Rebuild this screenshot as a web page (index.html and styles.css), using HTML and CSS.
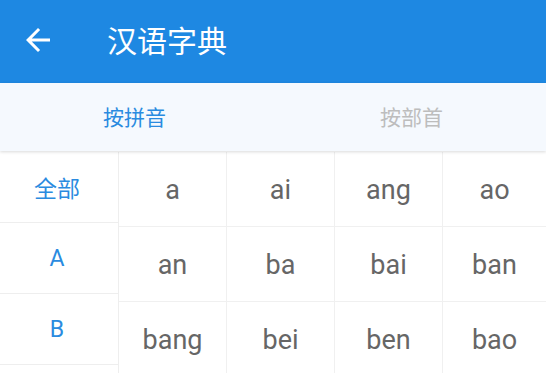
FILE: index.html
```html
<!DOCTYPE html>
<html>
<head>
  <title>汉语字典</title>
  <link rel="stylesheet" href="styles.css">
</head>
<body>
  <div class="header">
    <svg class="back" width="36" height="36" viewBox="0 0 24 24">
      <path d="M20 11H7.83l5.59-5.59L12 4l-8 8 8 8 1.41-1.41L7.83 13H20v-2z" fill="#fff"/>
    </svg>
    <div class="title">汉语字典</div>
  </div>

  <div class="tabs">
    <div class="tab active">按拼音</div>
    <div class="tab">按部首</div>
  </div>

  <div class="content">
    <div class="side">
      <div class="side-item">全部</div>
      <div class="side-item">A</div>
      <div class="side-item">B</div>
    </div>
    <div class="grid">
      <div class="cell">a</div>
      <div class="cell">ai</div>
      <div class="cell">ang</div>
      <div class="cell">ao</div>
      <div class="cell">an</div>
      <div class="cell">ba</div>
      <div class="cell">bai</div>
      <div class="cell">ban</div>
      <div class="cell">bang</div>
      <div class="cell">bei</div>
      <div class="cell">ben</div>
      <div class="cell">bao</div>
    </div>
  </div>
</body>
</html>
```

FILE: styles.css
```css
body {
  margin: 0;
  padding: 0;
  font-family: Roboto, 'Noto Sans CJK SC', sans-serif;
  background-color: #fff;
  width: 546px;
  height: 373px;
  overflow: hidden;
}

.header {
  height: 83px;
  background-color: #1e88e2;
  display: flex;
  align-items: center;
  color: #fff;
}

.back {
  margin-left: 20px;
  margin-right: 51px;
  margin-top: -4px;
}

.title {
  font-size: 30px;
  margin-top: -6px;
}

.tabs {
  height: 68px;
  display: flex;
  background-color: #f5f9fe;
  box-shadow: 0 1px 3px rgba(0, 0, 0, 0.15);
  position: relative;
  z-index: 1;
}

.tab {
  flex: 1;
  display: flex;
  align-items: center;
  justify-content: center;
  font-size: 21px;
  color: #bdbdbd;
  padding-bottom: 2px;
}

.tab.active {
  color: #2a8be0;
  padding-right: 8px;
}

.content {
  display: flex;
  padding-top: 1px;
}

.side {
  width: 118px;
  border-right: 1px solid #eeeeee;
}

.side-item {
  height: 70px;
  border-bottom: 1px solid #eeeeee;
  display: flex;
  align-items: center;
  justify-content: center;
  font-size: 23px;
  color: #2a8be0;
  padding-right: 4px;
}

.grid {
  flex: 1;
  display: grid;
  grid-template-columns: 108px 108px 108px 1fr;
  align-content: start;
}

.cell {
  height: 72px;
  padding-top: 2px;
  border-right: 1px solid #f0f0f0;
  border-bottom: 1px solid #f0f0f0;
  display: flex;
  align-items: center;
  justify-content: center;
  font-size: 27px;
  color: #666666;
}

.cell:nth-child(4n) {
  border-right: none;
}
```
